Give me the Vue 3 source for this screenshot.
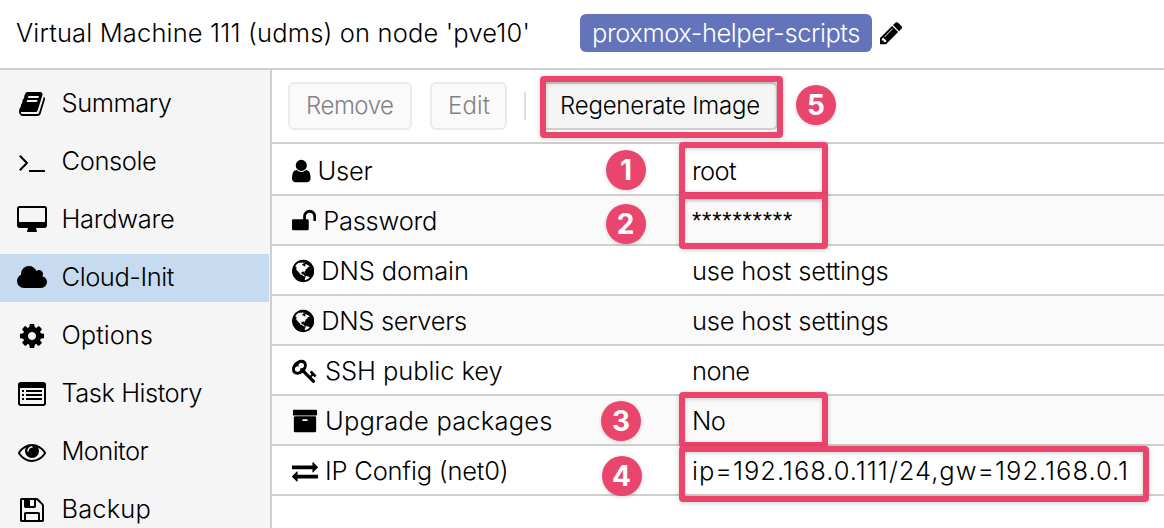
<script setup>
const paths = {
  book: 'M1703 478q40 57 18 129l-275 906q-19 64-76.5 107.5t-122.5 43.5h-923q-77 0-148.5-53.5t-99.5-131.5q-24-67-2-127 0-4 3-27t4-37q1-8-3-21.5t-3-19.5q2-11 8-21t16.5-23.5 16.5-23.5q23-38 45-91.5t30-91.5q3-10 .5-30t-.5-28q3-11 17-28t17-23q21-36 42-92t25-90q1-9-2.5-32t.5-28q4-13 22-30.5t22-22.5q19-26 42.5-84.5t27.5-96.5q1-8-3-25.5t-2-26.5q2-8 9-18t18-23 17-21q8-12 16.5-30.5t15-35 16-36 19.5-32 26.5-23.5 36-11.5 47.5 5.5l-1 3q38-9 51-9h761q74 0 114 56t18 130l-274 906q-36 119-71.5 153.5t-128.5 34.5h-869q-27 0-38 15-11 16-1 43 24 70 144 70h923q29 0 56-15.5t35-41.5l300-987q7-22 5-57 38 15 59 43zm-1064 2q-4 13 2 22.5t20 9.5h608q13 0 25.5-9.5t16.5-22.5l21-64q4-13-2-22.5t-20-9.5h-608q-13 0-25.5 9.5t-16.5 22.5zm-83 256q-4 13 2 22.5t20 9.5h608q13 0 25.5-9.5t16.5-22.5l21-64q4-13-2-22.5t-20-9.5h-608q-13 0-25.5 9.5t-16.5 22.5z',
  terminal: 'M649 983l-466 466q-10 10-23 10t-23-10l-50-50q-10-10-10-23t10-23l393-393-393-393q-10-10-10-23t10-23l50-50q10-10 23-10t23 10l466 466q10 10 10 23t-10 23zm1079 457v64q0 14-9 23t-23 9h-960q-14 0-23-9t-9-23v-64q0-14 9-23t23-9h960q14 0 23 9t9 23z',
  desktop: 'M1792 992v-832q0-13-9.5-22.5t-22.5-9.5h-1600q-13 0-22.5 9.5t-9.5 22.5v832q0 13 9.5 22.5t22.5 9.5h1600q13 0 22.5-9.5t9.5-22.5zm128-832v1088q0 66-47 113t-113 47h-544q0 37 16 77.5t32 71 16 43.5q0 26-19 45t-45 19h-512q-26 0-45-19t-19-45q0-14 16-44t32-70 16-78h-544q-66 0-113-47t-47-113v-1088q0-66 47-113t113-47h1600q66 0 113 47t47 113z',
  cloud: 'M1984 1152q0 159-112.5 271.5t-271.5 112.5h-1088q-185 0-316.5-131.5t-131.5-316.5q0-132 71-241.5t187-163.5q-2-28-2-43 0-212 150-362t362-150q158 0 286.5 88t187.5 230q70-62 166-62 106 0 181 75t75 181q0 75-41 138 129 30 213 134.5t84 239.5z',
  cog: 'M1152 896q0-106-75-181t-181-75-181 75-75 181 75 181 181 75 181-75 75-181zm512-109v222q0 12-8 23t-20 13l-185 28q-19 54-39 91 35 50 107 138 10 12 10 25t-9 23q-27 37-99 108t-94 71q-12 0-26-9l-138-108q-44 23-91 38-16 136-29 186-7 28-36 28h-222q-14 0-24.5-8.5t-11.5-21.5l-28-184q-49-16-90-37l-141 107q-10 9-25 9-14 0-25-11-126-114-165-168-7-10-7-23 0-12 8-23 15-21 51-66.5t54-70.5q-27-50-41-99l-183-27q-13-2-21-12.5t-8-23.5v-222q0-12 8-23t19-13l186-28q14-46 39-92-40-57-107-138-10-12-10-24 0-10 9-23 26-36 98.5-107.5t94.5-71.5q13 0 26 10l138 107q44-23 91-38 16-136 29-186 7-28 36-28h222q14 0 24.5 8.5t11.5 21.5l28 184q49 16 90 37l142-107q9-9 24-9 13 0 25 10 129 119 165 170 7 8 7 22 0 12-8 23-15 21-51 66.5t-54 70.5q26 50 41 98l183 28q13 2 21 12.5t8 23.5z',
  list: 'M160 128h1472q66 0 113 47t47 113v1216q0 66-47 113t-113 47h-1472q-66 0-113-47t-47-113v-1216q0-66 47-113t113-47zm0 384q-32 0-32 32v960q0 32 32 32h1472q32 0 32-32v-960q0-32-32-32zM256 640h128v128h-128zM256 896h128v128h-128zM256 1152h128v128h-128zM512 640h1024v128h-1024zM512 896h1024v128h-1024zM512 1152h1024v128h-1024z',
  eye: 'M1664 960q-152-236-381-353 61 104 61 225 0 185-131.5 316.5t-316.5 131.5-316.5-131.5-131.5-316.5q0-121 61-225-229 117-381 353 133 205 333.5 326.5t434.5 121.5 434.5-121.5 333.5-326.5zm-720-384q0-20-14-34t-34-14q-125 0-214.5 89.5t-89.5 214.5q0 20 14 34t34 14 34-14 14-34q0-86 61-147t147-61q20 0 34-14t14-34zm848 384q0 34-20 69-140 230-376.5 368.5t-499.5 138.5-499.5-139-376.5-368q-20-35-20-69t20-69q140-229 376.5-368t499.5-139 499.5 139 376.5 368q20 35 20 69z',
  floppy: 'M512 1536h768v-384h-768v384zm896 0h128v-896q0-14-10-38.5t-20-34.5l-281-281q-10-10-34-20t-39-10v416q0 40-28 68t-68 28h-576q-40 0-68-28t-28-68v-416h-128v1280h128v-416q0-40 28-68t68-28h832q40 0 68 28t28 68v416zm-384-928v-320q0-13-9.5-22.5t-22.5-9.5h-192q-13 0-22.5 9.5t-9.5 22.5v320q0 13 9.5 22.5t22.5 9.5h192q13 0 22.5-9.5t9.5-22.5zm640 32v928q0 40-28 68t-68 28h-1344q-40 0-68-28t-28-68v-1344q0-40 28-68t68-28h928q40 0 88 20t76 48l280 280q28 28 48 76t20 88z',
  user: 'M1536 1399q0 109-62.5 187t-150.5 78h-854q-88 0-150.5-78t-62.5-187q0-85 8.5-160.5t31.5-152 58.5-131 94-89 134.5-34.5q131 128 313 128t313-128q76 0 134.5 34.5t94 89 58.5 131 31.5 152 8.5 160.5zm-256-887q0 159-112.5 271.5t-271.5 112.5-271.5-112.5-112.5-271.5 112.5-271.5 271.5-112.5 271.5 112.5 112.5 271.5z',
  unlock: 'M1728 576v256q0 26-19 45t-45 19h-64q-26 0-45-19t-19-45v-256q0-106-75-181t-181-75-181 75-75 181v192h96q40 0 68 28t28 68v576q0 40-28 68t-68 28h-960q-40 0-68-28t-28-68v-576q0-40 28-68t68-28h672v-192q0-185 131.5-316.5t316.5-131.5 316.5 131.5 131.5 316.5z',
  globe: 'M896 128q209 0 385.5 103t279.5 279.5 103 385.5-103 385.5-279.5 279.5-385.5 103-385.5-103-279.5-279.5-103-385.5 103-385.5 279.5-279.5 385.5-103zm274 521q-2 1-9.5 9.5t-13.5 9.5q2 0 4.5-5t5-11 3.5-7q6-7 22-15 14-6 52-12 34-8 51 11-2-2 9.5-13t14.5-12q3-2 15-4.5t15-7.5l2-22q-12 1-17.5-7t-6.5-21q0 2-6 8 0-7-4.5-8t-11.5 1-9 1q-10-3-15-7.5t-8-16.5-4-15q-2-5-9.5-11t-9.5-10q-1-2-2.5-5.5t-3-6.5-4-5.5-5.5-2.5-7 5-7.5 10-4.5 5q-3-2-6-1.5t-4.5 1-4.5 3-5 3.5q-3 2-8.5 3t-8.5 2q15-5-1-11-10-4-16-3 9-4 7.5-12t-8.5-14h5q-1-4-8.5-8.5t-17.5-8.5-13-6q-8-5-34-9.5t-33-.5q-5 6-4.5 10.5t4 14 3.5 12.5q1 6-5.5 13t-6.5 12q0 7 14 15.5t10 21.5q-3 8-16 16t-16 12q-5 8-1.5 18.5t10.5 16.5q2 2 1.5 4t-3.5 4.5-5.5 4-6.5 3.5l-3 2q-11 5-20.5-6t-13.5-26q-7-25-16-30-23-8-29 1-5-13-41-26-25-9-58-4 6-1 0-15-7-15-19-12 3-6 4-17.5t1-13.5q3-13 12-23 1-1 7-8.5t9.5-13.5.5-6q35 4 50-11 5-5 11.5-17t10.5-17q9-6 14-5.5t14.5 5.5 14.5 5q14 1 15.5-11t-7.5-20q12 1 3-17-4-7-8-9-12-4-27 5-8 4 2 8-1-1-9.5 10.5t-16.5 17.5-16-5q-1-1-5.5-13.5t-9.5-13.5q-8 0-16 15 3-8-11-15t-24-8q19-12-8-27-7-4-20.5-5t-19.5 4q-5 7-5.5 11.5t5 8 10.5 5.5 11.5 4 8.5 3q14 10 8 14-2 1-8.5 3.5t-11.5 4.5-6 4q-3 4 0 14t-2 14q-5-5-9-17.5t-7-16.5q7 9-25 6l-10-1q-4 0-16 2t-20.5 1-13.5-8q-4-8 0-20 1-4 4-2-4-3-11-9.5t-10-8.5q-46 15-94 41 6 1 12-1 5-2 13-6.5t10-5.5q34-14 42-7l5-5q14 16 20 25-7-4-30-1-20 6-22 12 7 12 5 18-4-3-11.5-10t-14.5-11-15-5q-16 0-22 1-146 80-235 222 7 7 12 8 4 1 5 9t2.5 11 11.5-3q9 8 3 19 1-1 44 27 19 17 21 21 3 11-10 18-1-2-9-9t-9-4q-3 5 .5 18.5t10.5 12.5q-7 0-9.5 16t-2.5 35.5-1 23.5l2 1q-3 12 5.5 34.5t21.5 19.5q-13 3 20 43 6 8 8 9 3 2 12 7.5t15 10 10 10.5q4 5 10 22.5t14 23.5q-2 6 9.5 20t10.5 23q-1 0-2.5 1t-2.5 1q3 7 15.5 14t15.5 13q1 3 2 10t3 11 8 2q2-20-24-62-15-25-17-29-3-5-5.5-15.5t-4.5-14.5q2 0 6 1.5t8.5 3.5 7.5 4 2 3q-3 7 2 17.5t12 18.5 17 19 12 13q6 6 14 19.5t0 13.5q9 0 20 10t17 20q5 8 8 26t5 24q2 7 8.5 13.5t12.5 9.5l16 8 13 7q5 2 18.5 10.5t21.5 11.5q10 4 16 4t14.5-2.5 13.5-3.5q15-2 29 15t21 21q36 19 55 11-2 1 .5 7.5t8 15.5 9 14.5 5.5 8.5q5 6 18 15t18 15q6-4 7-9-3 8 7 20t18 10q14-3 14-32-31 15-49-18 0-1-2.5-5.5t-4-8.5-2.5-8.5 0-7.5 5-3q9 0 10-3.5t-2-12.5-4-13q-1-8-11-20t-12-15q-5 9-16 8t-16-9q0 1-1.5 5.5t-1.5 6.5q-13 0-15-1 1-3 2.5-17.5t3.5-22.5q1-4 5.5-12t7.5-14.5 4-12.5-4.5-9.5-17.5-2.5q-19 1-26 20-1 3-3 10.5t-5 11.5-9 7q-7 3-24 2t-24-5q-13-8-22.5-29t-9.5-37q0-10 2.5-26.5t3-25-5.5-24.5q3-2 9-9.5t10-10.5q2-1 4.5-1.5t4.5 0 4-1.5 3-6q-1-1-4-3-3-3-4-3 7 3 28.5-1.5t27.5 1.5q15 11 22-2 0-1-2.5-9.5t-.5-13.5q5 27 29 9 3 3 15.5 5t17.5 5q3 2 7 5.5t5.5 4.5 5-.5 8.5-6.5q10 14 12 24 11 40 19 44 7 3 11 2t4.5-9.5 0-14-1.5-12.5l-1-8v-18l-1-8q-15-3-18.5-12t1.5-18.5 15-18.5q1-1 8-3.5t15.5-6.5 12.5-8q21-19 15-35 7 0 11-9-1 0-5-3t-7.5-5-4.5-2q9-5 2-16 5-3 7.5-11t7.5-10q9 12 21 2 7-8 1-16 5-7 20.5-10.5t18.5-9.5q7 2 8-2t1-12 3-12q4-5 15-9t13-5l17-11q3-4 0-4 18 2 31-11 10-11-6-20 3-6-3-9.5t-15-5.5q3-1 11.5-.5t10.5-1.5q15-10-7-16-17-5-43 12zm-163 877q206-36 351-189-3-3-12.5-4.5t-12.5-3.5q-18-7-24-8 1-7-2.5-13t-8-9-12.5-8-11-7q-2-2-7-6t-7-5.5-7.5-4.5-8.5-2-10 1l-3 1q-3 1-5.5 2.5t-5.5 3-4 3 0 2.5q-21-17-36-22-5-1-11-5.5t-10.5-7-10-1.5-11.5 7q-5 5-6 15t-2 13q-7-5 0-17.5t2-18.5q-3-6-10.5-4.5t-12 4.5-11.5 8.5-9 6.5-8.5 5.5-8.5 7.5q-3 4-6 12t-5 11q-2-4-11.5-6.5t-9.5-5.5q2 10 4 35t5 38q7 31-12 48-27 25-29 40-4 22 12 26 0 7-8 20.5t-7 21.5q0 6 2 16z',
  key: 'M832 512q0-80-56-136t-136-56-136 56-56 136q0 42 19 83-41-19-83-19-80 0-136 56t-56 136 56 136 136 56 136-56 56-136q0-42-19-83 41 19 83 19 80 0 136-56t56-136zm851 704q0 17-49 66t-66 49q-9 0-28.5-16t-36.5-33-38.5-40-24.5-26l-96 96 220 220q28 28 28 68 0 42-39 81t-81 39q-40 0-68-28l-671-671q-176 131-365 131-163 0-265.5-102.5t-102.5-265.5q0-160 95-313t248-248 313-95q163 0 265.5 102.5t102.5 265.5q0 189-131 365l355 355 96-96q-3-3-26-24.5t-40-38.5-33-36.5-16-28.5q0-17 49-66t66-49q13 0 23 10 6 6 46 44.5t82 79.5 86.5 86 73 78 28.5 41z',
  archive: 'M1088 832q0-26-19-45t-45-19h-256q-26 0-45 19t-19 45 19 45 45 19h256q26 0 45-19t19-45zm576-192v960q0 26-19 45t-45 19h-1408q-26 0-45-19t-19-45v-960q0-26 19-45t45-19h1408q26 0 45 19t19 45zm64-448v256q0 26-19 45t-45 19h-1536q-26 0-45-19t-19-45v-256q0-26 19-45t45-19h1536q26 0 45 19t19 45z',
  exchange: 'M1792 1184v192q0 13-9.5 22.5t-22.5 9.5h-1376v192q0 13-9.5 22.5t-22.5 9.5q-12 0-24-10l-319-320q-9-9-9-22 0-14 9-23l320-320q9-9 23-9 13 0 22.5 9.5t9.5 22.5v192h1376q13 0 22.5 9.5t9.5 22.5zm0-544q0 14-9 23l-320 320q-9 9-23 9-13 0-22.5-9.5t-9.5-22.5v-192h-1376q-13 0-22.5-9.5t-9.5-22.5v-192q0-13 9.5-22.5t22.5-9.5h1376v-192q0-14 9-23t23-9q12 0 24 10l319 319q9 9 9 23z',
  pencil: 'M491 1536l91-91-235-235-91 91v107h128v128h107zm523-928q0-22-22-22-10 0-17 7l-542 542q-7 7-7 17 0 22 22 22 10 0 17-7l542-542q7-7 7-17zm-54-192l416 416-832 832h-416v-416zm683 96q0 53-37 90l-166 166-416-416 166-165q36-38 90-38 53 0 91 38l235 234q37 39 37 91z'
}

// box: [x offset, width] of the glyph in its 1792-unit em
const menu = [
  { label: 'Summary', icon: 'book', box: [0, 1792], w: 110 },
  { label: 'Console', icon: 'terminal', box: [0, 1792], w: 95 },
  { label: 'Hardware', icon: 'desktop', box: [0, 1920], w: 113 },
  { label: 'Cloud-Init', icon: 'cloud', box: [64, 1920], w: 112.5, active: true },
  { label: 'Options', icon: 'cog', box: [0, 1792], w: 91.5 },
  { label: 'Task History', icon: 'list', box: [0, 1792], w: 140.5 },
  { label: 'Monitor', icon: 'eye', box: [0, 1792], w: 86.5 },
  { label: 'Backup', icon: 'floppy', box: [0, 1792], w: 89.5 }
]

const rows = [
  { label: 'User', icon: 'user', box: [256, 1280], w: 55, value: 'root', vw: 44 },
  { label: 'Password', icon: 'unlock', box: [64, 1664], w: 114, value: '**********', vw: 101, secret: true },
  { label: 'DNS domain', icon: 'globe', box: [128, 1536], w: 147.5, value: 'use host settings', vw: 196.5 },
  { label: 'DNS servers', icon: 'globe', box: [128, 1536], w: 145.5, value: 'use host settings', vw: 196.5 },
  { label: 'SSH public key', icon: 'key', box: [0, 1792], w: 177.5, value: 'none', vw: 57.5 },
  { label: 'Upgrade packages', icon: 'archive', box: [0, 1792], w: 227.5, value: 'No', vw: 33.5 },
  { label: 'IP Config (net0)', icon: 'exchange', box: [0, 1792], w: 183.5, value: 'ip=192.168.0.111/24,gw=192.168.0.1', vw: 437 }
]

// Tracks a label so that it fills the given width
const vFit = {
  mounted(el, { value }) {
    const natural = el.getBoundingClientRect().width
    el.style.letterSpacing = (value - natural) / el.textContent.length + 'px'
  }
}
</script>

<template>
  <div class="app">
    <header class="top">
      <div class="title"><span v-fit="514" class="t">Virtual Machine 111 (udms) on node 'pve10'</span></div>
      <span class="tag"><span v-fit="268" class="t">proxmox-helper-scripts</span></span>
      <svg class="pencil" viewBox="128 0 1536 1792"><path :d="paths.pencil" /></svg>
    </header>
    <div class="body">
      <nav class="side">
        <div v-for="m in menu" :key="m.label" class="item" :class="{ active: m.active }">
          <span class="slot">
            <svg class="ico" :viewBox="`${m.box[0]} 0 ${m.box[1]} 1792`"><path fill-rule="evenodd" :d="paths[m.icon]" /></svg>
          </span>
          <span v-fit="m.w" class="t">{{ m.label }}</span>
        </div>
      </nav>
      <main class="main">
        <div class="toolbar">
          <button class="btn off remove"><span v-fit="87.5" class="t">Remove</span></button>
          <button class="btn off edit"><span v-fit="42" class="t">Edit</span></button>
          <i class="sep"></i>
          <button class="btn regen"><span v-fit="200" class="t">Regenerate Image</span></button>
        </div>
        <div v-for="r in rows" :key="r.label" class="row">
          <div class="name">
            <svg class="gico" :viewBox="`${r.box[0]} 0 ${r.box[1]} 1792`"><path :d="paths[r.icon]" /></svg>
            <span v-fit="r.w" class="t">{{ r.label }}</span>
          </div>
          <div class="value"><span v-fit="r.vw" class="t" :class="{ secret: r.secret }">{{ r.value }}</span></div>
        </div>
      </main>
    </div>
    <i class="frame f5"></i>
    <i class="frame f1"></i>
    <i class="frame f2"></i>
    <i class="frame f3"></i>
    <i class="frame f4"></i>
    <b v-for="n in 5" :key="n" class="dot" :class="'d' + n">{{ n }}</b>
  </div>
</template>

<style>
body { margin: 0; overflow: hidden; }
</style>

<style scoped>
.app {
  position: relative;
  width: 1164px;
  height: 528px;
  overflow: hidden;
  background: #fff;
  color: #000;
  font-family: Inter, "Liberation Sans", sans-serif;
  font-size: 25.5px;
  font-weight: 300;
  box-sizing: border-box;
}
.t { display: inline-block; white-space: pre; line-height: 32px; }
svg { display: block; fill: #000; flex: none; }
.top {
  display: flex;
  align-items: center;
  height: 68px;
  padding: 0 0 2px 16px;
  box-sizing: border-box;
}
.title { width: 564px; flex: none; }
.tag {
  display: flex;
  align-items: center;
  width: 292px;
  height: 38px;
  padding-left: 12px;
  box-sizing: border-box;
  border-radius: 6px;
  background: #6374bb;
  color: #fff;
}
.pencil { width: 22.3px; height: 26px; margin-left: 8px; }
.body { display: flex; height: 460px; border-top: 2px solid #cfcfcf; box-sizing: border-box; }
.side {
  width: 272px;
  flex: none;
  box-sizing: border-box;
  padding-top: 10px;
  border-right: 2px solid #cfcfcf;
  background: #f5f5f5;
  display: flex;
  flex-direction: column;
  gap: 10px;
}
.item { flex: none; display: flex; align-items: center; height: 48px; width: 269px; }
.item .t { padding-bottom: 2px; }
.active { background: #c7dbf0; }
.slot { width: 61.5px; padding: 0 0 0 2px; box-sizing: border-box; display: flex; justify-content: center; }
.ico { height: 28px; }
.main { flex: 1; min-width: 0; }
.toolbar {
  display: flex;
  align-items: center;
  height: 74px;
  padding-left: 16px;
  box-sizing: border-box;
  border-bottom: 2px solid #cfcfcf;
}
.btn {
  display: flex;
  align-items: center;
  height: 48px;
  padding: 0 0 0 16px;
  box-sizing: border-box;
  border: 2px solid #cfcfcf;
  border-radius: 6px;
  background: #f5f5f5;
  color: #000;
  font: inherit;
  font-size: 24px;
}
.off { border-color: #ebebeb; background: #fafafa; color: #828282; }
.remove { width: 124px; }
.edit { width: 77px; margin-left: 18px; }
.sep { width: 2px; height: 28px; margin-left: 17px; background: #dedede; }
.regen { width: 236px; margin-left: 16px; }
.row {
  display: flex;
  align-items: center;
  height: 50px;
  box-sizing: border-box;
  border-bottom: 2px solid #cfcfcf;
  padding-top: 2px;
}
.row:nth-child(2) { height: 52px; padding-top: 4px; }
.row:nth-child(odd) { background: #fafafa; }
.name { display: flex; align-items: center; gap: 7px; width: 400px; padding-left: 20px; }
.gico { height: 26px; }
.value { display: flex; }
.secret { font-family: "Liberation Sans", Arial, sans-serif; font-size: 24px; }
.frame {
  position: absolute;
  box-sizing: border-box;
  border: 6px solid #ea456c;
  border-radius: 4px;
  box-shadow: 0 1px 5px rgba(0, 0, 0, 0.2), inset 0 1px 4px rgba(0, 0, 0, 0.2);
}
.f5 { left: 540px; top: 76px; width: 243px; height: 61.5px; }
.f1 { left: 679px; top: 142px; width: 149px; height: 56px; }
.f2 { left: 679px; top: 193px; width: 149px; height: 56px; }
.f3 { left: 679px; top: 392px; width: 149px; height: 56px; }
.f4 { left: 679px; top: 446px; width: 470px; height: 56px; }
.dot {
  position: absolute;
  width: 40px;
  height: 40px;
  border-radius: 50%;
  background: #ea456c;
  color: #fff;
  font-weight: 700;
  font-size: 28px;
  line-height: 40px;
  text-align: center;
  box-shadow: 0 1px 4px rgba(0, 0, 0, 0.16);
}
.d1 { left: 606px; top: 150px; }
.d2 { left: 605.5px; top: 204px; }
.d3 { left: 601px; top: 401px; }
.d4 { left: 601.5px; top: 456px; }
.d5 { left: 796px; top: 85px; }
</style>
